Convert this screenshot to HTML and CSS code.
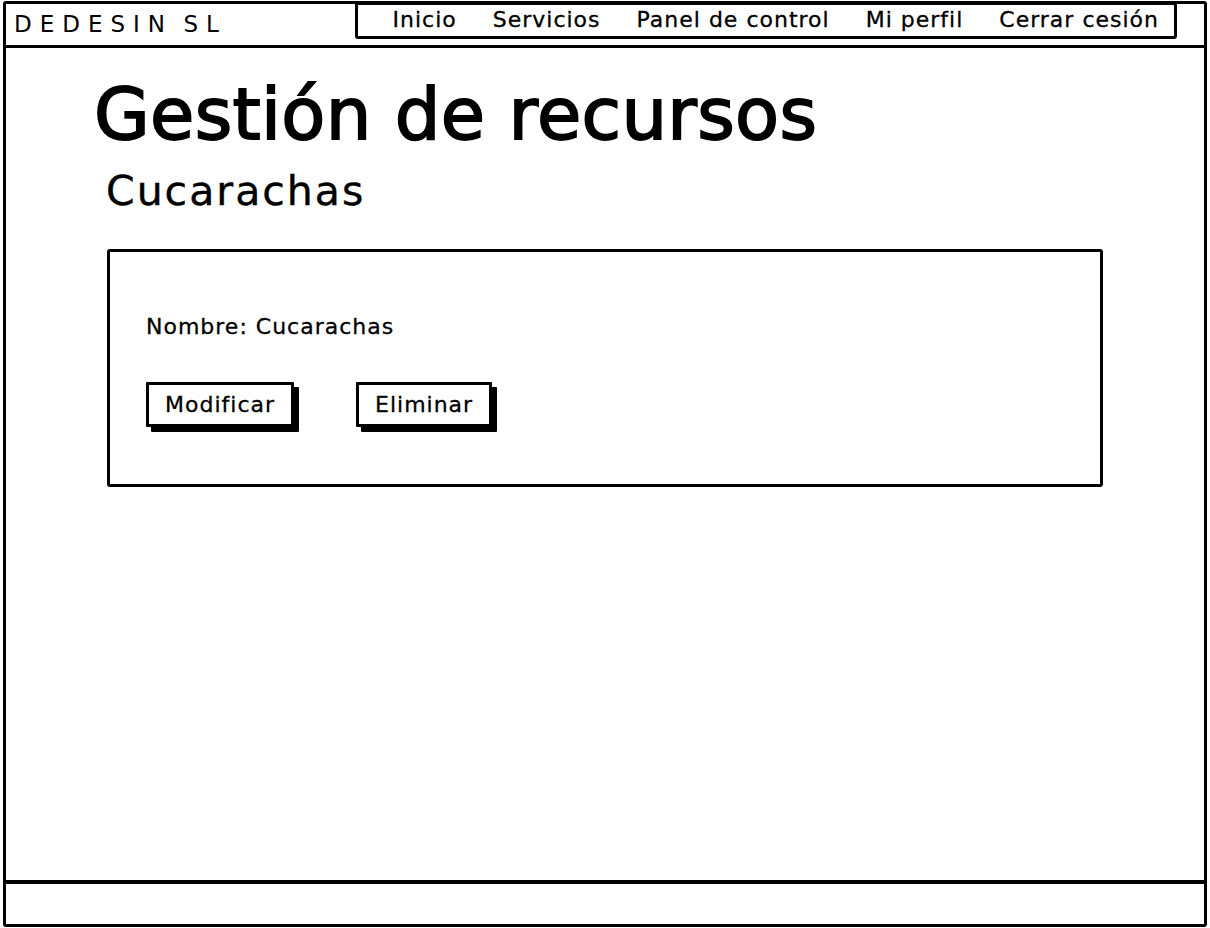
FILE: index.html
```html
<!DOCTYPE html>
<html lang="es">
<head>
<meta charset="utf-8">
<title>Gestión de recursos</title>
<link rel="stylesheet" href="styles.css">
</head>
<body>
<div class="window">
  <header class="topbar">
    <div class="brand">DEDESIN SL</div>
    <nav class="nav">
      <a class="nav-link">Inicio</a>
      <a class="nav-link">Servicios</a>
      <a class="nav-link">Panel de control</a>
      <a class="nav-link">Mi perfil</a>
      <a class="nav-link">Cerrar cesión</a>
    </nav>
  </header>
  <main class="content">
    <h1 class="title">Gestión de recursos</h1>
    <h2 class="subtitle">Cucarachas</h2>
    <section class="card">
      <p class="field">Nombre: Cucarachas</p>
      <div class="actions">
        <button class="btn">Modificar</button>
        <button class="btn">Eliminar</button>
      </div>
    </section>
  </main>
  <footer class="footer"></footer>
</div>
</body>
</html>
```
FILE: styles.css
```css
* { box-sizing: border-box; }
html, body { margin: 0; padding: 0; background: #fff; }
body {
  font-family: "DejaVu Sans", "Liberation Sans", sans-serif;
  color: #000;
}
.window {
  margin: 1px 0 0 3px;
  width: 1204px;
  height: 926px;
  border: 3px solid #000;
  border-radius: 3px;
  display: flex;
  flex-direction: column;
}
.topbar {
  height: 44px;
  border-bottom: 3px solid #000;
  display: flex;
  align-items: flex-start;
  justify-content: space-between;
}
.brand {
  font-size: 23px;
  letter-spacing: 8px;
  word-spacing: -5px;
  line-height: 1;
  padding: 9px 0 0 8px;
}
.nav {
  margin: -2px 27px 0 0;
  width: 822px;
  height: 37px;
  border: 3px solid #000;
  border-radius: 3px;
  display: flex;
  justify-content: flex-end;
  align-items: center;
  gap: 36px;
  padding: 0 15px 2px 0;
}
.nav-link {
  font-size: 22px;
  letter-spacing: 1px;
  line-height: 1;
  -webkit-text-stroke: 0.3px #000;
}
.content {
  flex: 1;
  padding: 30px 0 0 0;
}
.title {
  margin: 0 0 0 88px;
  font-size: 72px;
  font-weight: 400;
  letter-spacing: 0.3px;
  -webkit-text-stroke: 1.8px #000;
  line-height: 1;
}
.subtitle {
  margin: 21px 0 0 100px;
  font-size: 41px;
  font-weight: 400;
  letter-spacing: 2px;
  -webkit-text-stroke: 0.4px #000;
  line-height: 1;
}
.card {
  margin: 37px 0 0 101px;
  width: 996px;
  height: 238px;
  border: 3px solid #000;
  border-radius: 3px;
  padding: 64px 0 0 36px;
}
.field {
  margin: 0;
  font-size: 22px;
  letter-spacing: 1px;
  line-height: 1;
  -webkit-text-stroke: 0.3px #000;
}
.actions {
  margin-top: 44px;
  display: flex;
  gap: 62px;
}
.btn {
  font-family: inherit;
  font-size: 22px;
  letter-spacing: 1px;
  line-height: 1;
  -webkit-text-stroke: 0.3px #000;
  background: #fff;
  color: #000;
  border: 3px solid #000;
  border-radius: 1px;
  box-shadow: 5px 5px 0 #000;
  height: 45px;
  padding: 0 16px;
}
.footer {
  height: 44px;
  border-top: 4px solid #000;
}
```
